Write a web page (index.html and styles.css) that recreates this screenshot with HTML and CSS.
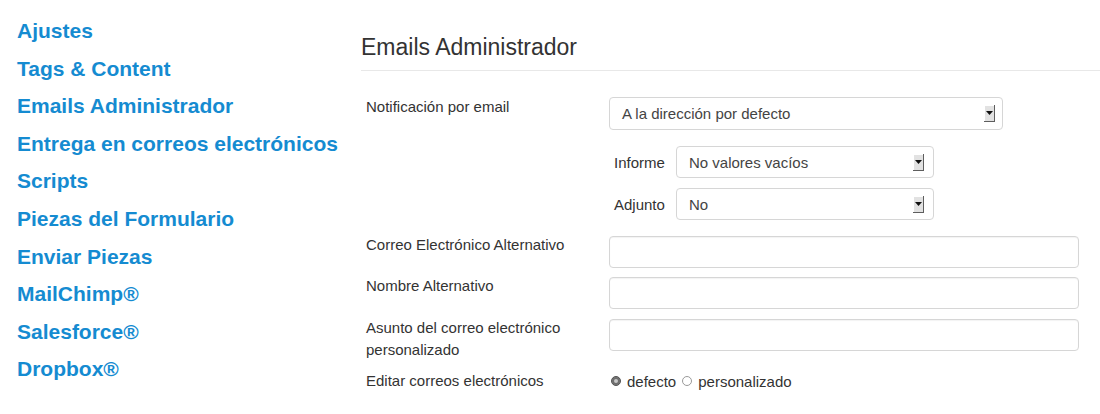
FILE: index.html
```html
<!DOCTYPE html>
<html lang="es">

<head>
    <meta charset="UTF-8">
    <title>Emails Administrador</title>
    <link rel="stylesheet" href="styles.css">
</head>

<body>
    <div class="page">
        <ul class="side-nav">
            <li><a href="#">Ajustes</a></li>
            <li><a href="#">Tags &amp; Content</a></li>
            <li><a href="#">Emails Administrador</a></li>
            <li><a href="#">Entrega en correos electrónicos</a></li>
            <li><a href="#">Scripts</a></li>
            <li><a href="#">Piezas del Formulario</a></li>
            <li><a href="#">Enviar Piezas</a></li>
            <li><a href="#">MailChimp®</a></li>
            <li><a href="#">Salesforce®</a></li>
            <li><a href="#">Dropbox®</a></li>
        </ul>

        <div class="content">
            <h2 class="page-title">Emails Administrador</h2>

            <div class="form-row row-notify">
                <div class="form-label">Notificación por email</div>
                <div class="form-field">
                    <div class="select select-main">
                        <span>A la dirección por defecto</span>
                        <svg class="arrow" width="11" height="17" viewBox="0 0 11 17">
                            <rect x="0" y="0" width="11" height="17" fill="#e2e2e2"/>
                            <path d="M0 0H10V1H1V16H0Z" fill="#ffffff"/>
                            <path d="M10 0H11V17H0V16H10Z" fill="#5e5e5e"/>
                            <path d="M2 6H9L5.5 10Z" fill="#111111"/>
                        </svg>
                    </div>
                </div>
            </div>

            <div class="sub-row sub-first">
                <div class="sub-label">Informe</div>
                <div class="select select-small">
                    <span>No valores vacíos</span>
                    <svg class="arrow" width="11" height="17" viewBox="0 0 11 17">
                        <rect x="0" y="0" width="11" height="17" fill="#e2e2e2"/>
                        <path d="M0 0H10V1H1V16H0Z" fill="#ffffff"/>
                        <path d="M10 0H11V17H0V16H10Z" fill="#5e5e5e"/>
                        <path d="M2 6H9L5.5 10Z" fill="#111111"/>
                    </svg>
                </div>
            </div>

            <div class="sub-row sub-second">
                <div class="sub-label">Adjunto</div>
                <div class="select select-small">
                    <span>No</span>
                    <svg class="arrow" width="11" height="17" viewBox="0 0 11 17">
                        <rect x="0" y="0" width="11" height="17" fill="#e2e2e2"/>
                        <path d="M0 0H10V1H1V16H0Z" fill="#ffffff"/>
                        <path d="M10 0H11V17H0V16H10Z" fill="#5e5e5e"/>
                        <path d="M2 6H9L5.5 10Z" fill="#111111"/>
                    </svg>
                </div>
            </div>

            <div class="form-row row-alt-email">
                <div class="form-label">Correo Electrónico Alternativo</div>
                <div class="form-field"><input type="text" class="text-input"></div>
            </div>

            <div class="form-row row-alt-name">
                <div class="form-label">Nombre Alternativo</div>
                <div class="form-field"><input type="text" class="text-input"></div>
            </div>

            <div class="form-row row-subject">
                <div class="form-label">Asunto del correo electrónico personalizado</div>
                <div class="form-field"><input type="text" class="text-input"></div>
            </div>

            <div class="form-row row-edit">
                <div class="form-label">Editar correos electrónicos</div>
                <div class="form-field radios">
                    <span class="radio checked"></span><span class="radio-text">defecto</span>
                    <span class="radio"></span><span class="radio-text">personalizado</span>
                </div>
            </div>
        </div>
    </div>
</body>

</html>
```

FILE: styles.css
```css
body {
    margin: 0;
    background-color: #ffffff;
    color: #333333;
    font-family: "Liberation Sans", Arial, sans-serif;
}

.page {
    display: flex;
    width: 1100px;
    height: 414px;
    overflow: hidden;
}

.side-nav {
    list-style: none;
    margin: 0;
    padding: 12px 0 0 17px;
    width: 344px;
    flex-shrink: 0;
}

.side-nav li {
    font-size: 21px;
    line-height: 37.6px;
}

.side-nav a {
    color: #158bd1;
    font-size: 21px;
    font-weight: bold;
    text-decoration: none;
    white-space: nowrap;
}

.content {
    flex: 1;
}

.page-title {
    margin: 0;
    padding: 32px 0 8px 0;
    font-size: 23px;
    font-weight: normal;
    line-height: 30px;
    color: #333333;
    border-bottom: 1px solid #e8e8e8;
}

.form-row {
    display: flex;
    align-items: flex-start;
}

.form-label {
    width: 248px;
    padding-left: 5px;
    box-sizing: border-box;
    font-size: 15px;
    line-height: 22px;
    color: #333333;
}

.form-field {
    flex: 1;
}

.row-notify {
    margin-top: 25px;
}

.row-notify .form-field {
    padding-top: 1px;
}

.select {
    display: flex;
    align-items: center;
    justify-content: space-between;
    box-sizing: border-box;
    border: 1px solid #d6d6d6;
    border-radius: 4px;
    padding: 0 7px 0 12px;
    font-size: 15px;
    color: #444444;
    background-color: #ffffff;
}

.select-main {
    width: 394px;
    height: 33px;
}

.select-small {
    width: 258px;
    height: 32px;
}

.select-small .arrow {
    margin-right: 2px;
}

.arrow {
    display: block;
}

.sub-row {
    display: flex;
    align-items: center;
    padding-left: 253px;
}

.sub-label {
    width: 62px;
    font-size: 15px;
    color: #333333;
}

.sub-first {
    margin-top: 16px;
}

.sub-second {
    margin-top: 10px;
}

.text-input {
    display: block;
    box-sizing: border-box;
    width: 470px;
    height: 32px;
    margin: 2px 0 0 0;
    border: 1px solid #d6d6d6;
    border-radius: 4px;
    box-shadow: inset 0 1px 1px rgba(0, 0, 0, 0.05);
    background-color: #ffffff;
}

.row-alt-email {
    margin-top: 14px;
}

.row-alt-name {
    margin-top: 7px;
}

.row-subject {
    margin-top: 8px;
}

.row-edit {
    margin-top: 9px;
}

.radios {
    display: flex;
    align-items: center;
    height: 22px;
    padding-left: 2px;
    font-size: 15px;
    color: #333333;
}

.radio {
    width: 10px;
    height: 10px;
    box-sizing: border-box;
    border: 1px solid #9a9a9a;
    border-radius: 50%;
    background-color: #ffffff;
    margin-right: 6px;
}

.radio.checked {
    border-color: #555555;
    background-color: #6e6e6e;
    box-shadow: inset 0 0 0 2px #6e6e6e, inset 0 0 0 4px #c8c8c8;
}

.radio-text {
    margin-right: 6px;
}
```
